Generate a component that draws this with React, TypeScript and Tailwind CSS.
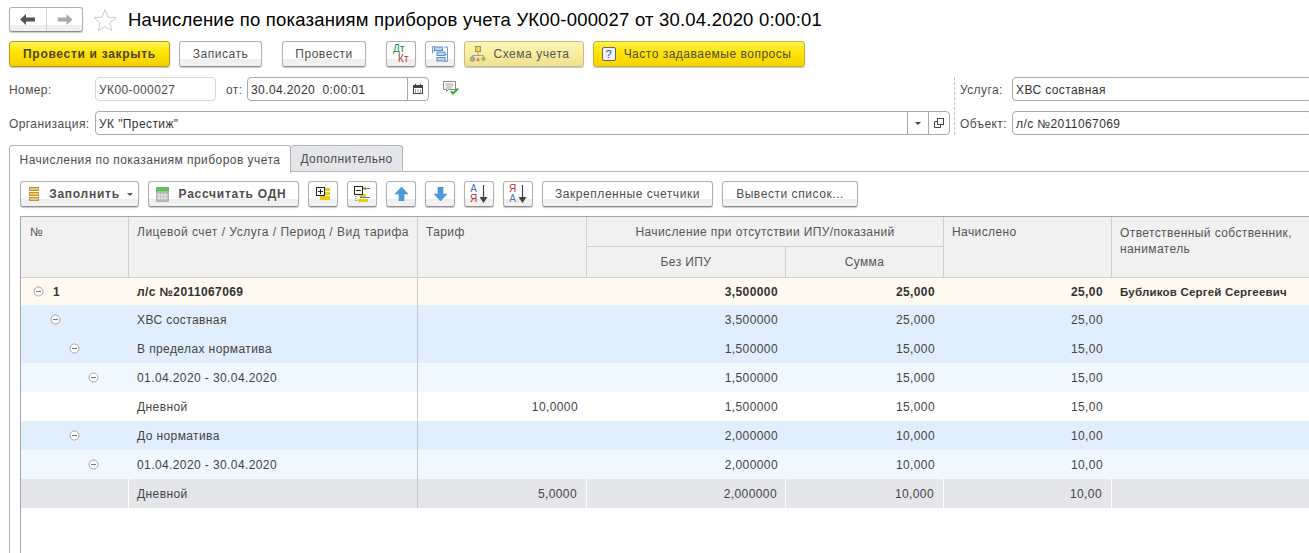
import { ReactNode } from 'react';

const BTN_BG = 'bg-[linear-gradient(#ffffff_0%,#ffffff_72%,#eeeeee_72%,#f2f2f2_100%)]';

// Обычная кнопка командной панели 1С
function Btn({ w, bold, children }: { w: string; bold?: boolean; children: ReactNode }) {
  return (
    <div
      className={`${w} ${BTN_BG} ${bold ? 'font-bold tracking-[0.75px]' : 'tracking-[0.55px]'} h-[26px] flex items-center justify-center shrink-0 rounded-[3px] border border-[#b0b0b0] border-b-[#8f8f8f] shadow-[0_1px_1px_#c8c8c8] text-[#4d4d4d]`}
    >
      {children}
    </div>
  );
}

function Minus() {
  return (
    <svg width="11" height="11" viewBox="0 0 11 11" className="shrink-0">
      <circle cx="5.5" cy="5.5" r="4.5" fill="#fff" stroke="#a6a6a6" />
      <path d="M3 5.5h5" stroke="#777" />
    </svg>
  );
}

function Field({ w, strong, border = 'border-[#a8a8a8]', children }: { w: string; strong?: boolean; border?: string; children?: ReactNode }) {
  return (
    <div className={`${w} ${border} ${strong ? 'text-[#333]' : 'text-[#4d4d4d]'} h-[24px] flex items-center rounded-[4px] border bg-white pl-[3px] shrink-0`}>
      {children}
    </div>
  );
}

function FieldText({ children }: { children: ReactNode }) {
  return <span className="flex-1 pt-[2px] whitespace-pre">{children}</span>;
}

function Label({ w, children }: { w: string; children: ReactNode }) {
  return <span className={`${w} pt-[2px] shrink-0`}>{children}</span>;
}

function BackArrow({ color }: { color: string }) {
  return (
    <svg width="15" height="11" viewBox="0 0 15 11">
      <path d="M0 5.5 6 0v3.5h9v4H6V11z" fill={color} />
    </svg>
  );
}

function UpArrow({ down }: { down?: boolean }) {
  return (
    <svg width="13" height="14" viewBox="0 0 13 14" className={down ? 'rotate-180' : ''}>
      <path d="M6.5 0 13 7H9v7H4V7H0z" fill="#4a9bdc" stroke="#3b85c4" strokeWidth="0.5" />
    </svg>
  );
}

function SortIcon({ top, bottom, topColor, bottomColor }: { top: string; bottom: string; topColor: string; bottomColor: string }) {
  return (
    <div className="flex items-center gap-[2px]">
      <div className="flex flex-col items-center text-[10px] leading-[10px] font-normal tracking-normal">
        <span className={topColor}>{top}</span>
        <span className={bottomColor}>{bottom}</span>
      </div>
      <svg width="9" height="19" viewBox="0 0 9 19">
        <path d="M4.5 0v14" stroke="#444" strokeWidth="1.2" />
        <path d="M0.5 12h8L4.5 18z" fill="#444" />
      </svg>
    </div>
  );
}

function TreeExpandIcon() {
  return (
    <svg width="15" height="15" viewBox="0 0 15 15">
      <rect x="7" y="1" width="7" height="3" fill="#e6cc14" />
      <rect x="7" y="5" width="7" height="3" fill="#e6cc14" />
      <rect x="4" y="9" width="10" height="4" fill="#e6cc14" />
      <rect x="0.5" y="0.5" width="8" height="8" fill="#fff" stroke="#222" />
      <path d="M2 4.5h5M4.5 2v5" stroke="#222" />
    </svg>
  );
}

function TreeCollapseIcon() {
  return (
    <svg width="16" height="17" viewBox="0 0 16 17">
      <rect x="5" y="1" width="7" height="3" fill="#e6cc14" />
      <rect x="5" y="8" width="7" height="3" fill="#e6cc14" />
      <rect x="4" y="13" width="10" height="3" fill="#e6cc14" />
      <path d="M9 2.5h7M6 11.5h10" stroke="#3a78b8" />
      <rect x="0.5" y="0.5" width="8" height="8" fill="#fff" stroke="#222" />
      <path d="M2 4.5h5" stroke="#222" />
      <path d="M2 10v6" stroke="#555" strokeDasharray="1 1" />
    </svg>
  );
}

const ROW_GRID = 'grid grid-cols-[108px_289px_169px_199px_158px_168px_198px]';

type Row = {
  tone: string;
  indent: string;
  num?: string;
  name: string;
  tariff?: string;
  noIpu: string;
  sum: string;
  total: string;
  owner?: string;
  bold?: boolean;
  h?: string;
  noTree?: boolean;
  cellBorder?: string;
};

const rows: Row[] = [
  { tone: 'bg-[#fffaf0]', indent: 'pl-[12px]', num: '1', name: 'л/с №2011067069', noIpu: '3,500000', sum: '25,000', total: '25,00', owner: 'Бубликов Сергей Сергеевич', bold: true, h: 'h-[27px]' },
  { tone: 'bg-[#e1eefd]', indent: 'pl-[29px]', name: 'ХВС составная', noIpu: '3,500000', sum: '25,000', total: '25,00' },
  { tone: 'bg-[#e1eefd]', indent: 'pl-[48px]', name: 'В пределах норматива', noIpu: '1,500000', sum: '15,000', total: '15,00' },
  { tone: 'bg-[#eff7ff]', indent: 'pl-[67px]', name: '01.04.2020 - 30.04.2020', noIpu: '1,500000', sum: '15,000', total: '15,00' },
  { tone: 'bg-white', indent: '', noTree: true, name: 'Дневной', tariff: '10,0000', noIpu: '1,500000', sum: '15,000', total: '15,00' },
  { tone: 'bg-[#e1eefd]', indent: 'pl-[48px]', name: 'До норматива', noIpu: '2,000000', sum: '10,000', total: '10,00' },
  { tone: 'bg-[#eff7ff]', indent: 'pl-[67px]', name: '01.04.2020 - 30.04.2020', noIpu: '2,000000', sum: '10,000', total: '10,00' },
  { tone: 'bg-[#e5e6ea]', indent: '', noTree: true, name: 'Дневной', tariff: '5,0000', noIpu: '2,000000', sum: '10,000', total: '10,00', cellBorder: 'border-r border-white' },
];

function TableRow({ row }: { row: Row }) {
  const cell = row.cellBorder ?? '';
  const num = 'flex items-center justify-end pr-[9px]';
  return (
    <div className={`${ROW_GRID} ${row.tone} ${row.h ?? 'h-[29px]'} ${row.bold ? 'font-bold text-[#333]' : 'text-[#444]'}`}>
      <div className={`${cell} ${row.indent} flex items-center gap-[9px]`}>
        {!row.noTree && <Minus />}
        {row.num && <span>{row.num}</span>}
      </div>
      <div className="flex items-center border-r border-[#c8c8c8] pl-[8px]">{row.name}</div>
      <div className={`${cell} ${num}`}>{row.tariff}</div>
      <div className={`${cell} flex items-center justify-end pr-[8px]`}>{row.noIpu}</div>
      <div className={`${cell} ${num}`}>{row.sum}</div>
      <div className={`${cell} ${num}`}>{row.total}</div>
      <div className={`${cell} flex items-center pl-[8px] text-[11.5px] tracking-[0.2px]`}>{row.owner}</div>
    </div>
  );
}

const HEAD = 'bg-[#f1f1f1] border-r border-b border-[#cfcfcf] text-[#555]';

export default function App() {
  return (
    <div className="w-[1309px] h-[553px] overflow-hidden bg-white text-[12px] leading-[14px] font-['Liberation_Sans',Arial,sans-serif] text-[#4d4d4d] tracking-[0.4px]">
      {/* Заголовок */}
      <div className="flex items-center h-[25px] mt-[7px] ml-[9px] pt-0">
        <div className={`${BTN_BG} flex h-[25px] w-[74px] rounded-[3px] border border-[#b0b0b0] border-b-[#8f8f8f] shadow-[0_1px_1px_#c8c8c8]`}>
          <div className="flex flex-1 items-center justify-center border-r border-[#d0d0d0]"><BackArrow color="#555" /></div>
          <div className="flex flex-1 items-center justify-center rotate-180"><BackArrow color="#aaa" /></div>
        </div>
        <svg width="24" height="24" viewBox="0 0 24 24" className="ml-[10px] shrink-0">
          <path d="M12 1.5l3 7.6 8 .6-6.1 5.2 1.9 7.8L12 18.5l-6.8 4.2 1.9-7.8L1 9.7l8-.6z" fill="#fff" stroke="#c9ccd2" />
        </svg>
        <h1 className="ml-[11px] text-[18.5px] tracking-[0.2px] font-normal text-black whitespace-nowrap">
          Начисление по показаниям приборов учета УК00-000027 от 30.04.2020 0:00:01
        </h1>
      </div>

      {/* Команды */}
      <div className="flex items-center h-[26px] ml-[9px] mt-[9px]">
        <div className="w-[161px] h-[26px] flex items-center justify-center rounded-[3px] border border-[#b09a1a] bg-[linear-gradient(#fff15a_0%,#ffe300_45%,#f5d000_100%)] font-bold tracking-[0.7px] text-[#4d4520] shadow-[0_1px_1px_#c8c8c8]">
          Провести и закрыть
        </div>
        <div className="ml-[9px]"><Btn w="w-[83px]">Записать</Btn></div>
        <div className="ml-[20px]"><Btn w="w-[84px]">Провести</Btn></div>
        <div className="ml-[20px]">
          <Btn w="w-[30px]">
            <div className="flex flex-col text-[10px] leading-[10px] font-normal tracking-[0.3px]">
              <span className="text-[#0f8a3c]">Дт</span>
              <span className="text-[#b83232] ml-[5px]">Кт</span>
            </div>
          </Btn>
        </div>
        <div className="ml-[9px]">
          <Btn w="w-[30px]">
            <svg width="16" height="16" viewBox="0 0 16 16" fill="none">
              <path d="M3 .5H.5v7M.5 5H3M13 8.5h2.5V1H12M15.5 8.5v7H13" stroke="#6a9cc8" />
              <rect x="2.5" y="1" width="8" height="3.5" fill="#bcd4ec" stroke="#5b92c4" />
              <rect x="5" y="6" width="8" height="3.5" fill="#bcd4ec" stroke="#5b92c4" />
              <rect x="5" y="11.5" width="8" height="3.5" fill="#bcd4ec" stroke="#5b92c4" />
            </svg>
          </Btn>
        </div>
        <div className="ml-[9px] w-[120px] h-[26px] flex items-center justify-center gap-[7px] pr-[8px] rounded-[3px] border border-[#c4bc90] bg-[linear-gradient(#fdf5b4_0%,#f8eca0_50%,#efe08c_100%)] shadow-[0_1px_1px_#c8c8c8] tracking-[0.55px] text-[#555]">
          <svg width="16" height="16" viewBox="0 0 16 16" fill="none" className="opacity-75">
            <path d="M8 5v5M2.5 12V9.5h11V12" stroke="#888" />
            <rect x="5.5" y="0.5" width="5" height="5" fill="#f0d020" stroke="#777" />
            <circle cx="2.5" cy="13" r="2.2" fill="#8aa6c4" stroke="#777" />
            <path d="M6 15l2-4 2 4z" fill="#c2664c" />
            <path d="M11 13l2.5-2.5L16 13l-2.5 2.5z" fill="#5aaa5a" />
          </svg>
          Схема учета
        </div>
        <div className="ml-[9px] w-[212px] h-[26px] flex items-center justify-center gap-[8px] pr-[5px] rounded-[3px] border border-[#c2b23c] bg-[linear-gradient(#fff04a_0%,#ffe200_50%,#f6d400_100%)] shadow-[0_1px_1px_#c8c8c8] tracking-[0.5px] text-[#4d4d30]">
          <span className="w-[14px] h-[14px] flex items-center justify-center rounded-[2px] border border-[#666] bg-[#eef2fa] text-[#2a4cc0] text-[11px] tracking-normal">?</span>
          Часто задаваемые вопросы
        </div>
      </div>

      {/* Реквизиты шапки */}
      <div className="flex mt-[10px] ml-[9px]">
        <div className="w-[940px] flex flex-col gap-[10px]">
          <div className="flex items-center">
            <Label w="w-[86px]">Номер:</Label>
            <Field w="w-[121px]" border="border-[#d8d8d8]"><FieldText>УК00-000027</FieldText></Field>
            <Label w="ml-[10px] w-[21px]">от:</Label>
            <Field w="w-[182px]" strong>
              <FieldText>30.04.2020  0:00:01</FieldText>
              <span className="w-[21px] h-full flex items-center justify-center border-l border-[#a8a8a8]">
                <svg width="10" height="10" viewBox="0 0 10 10">
                  <rect x="0.5" y="1.5" width="9" height="8" fill="#fff" stroke="#444" />
                  <rect x="0" y="1" width="10" height="3" fill="#444" />
                  <path d="M2 6h1M4.5 6h1M7 6h1M2 8h1M4.5 8h1M7 8h1" stroke="#444" />
                  <path d="M2.5 0v2M7.5 0v2" stroke="#444" />
                </svg>
              </span>
            </Field>
            <svg width="16" height="14" viewBox="0 0 16 14" className="ml-[14px] -mt-[2px]">
              <path d="M.5.5h12v8h-7l-2 2v-2h-3z" fill="#fff" stroke="#8a8a8a" />
              <path d="M2.5 3h8M2.5 5h8M2.5 7h6" stroke="#a0a0a0" />
              <path d="M8 10l2 2.5L15 7.5" stroke="#35a835" strokeWidth="2" fill="none" />
            </svg>
          </div>
          <div className="flex items-center">
            <Label w="w-[86px]">Организация:</Label>
            <Field w="w-[855px]" strong>
              <FieldText>УК "Престиж"</FieldText>
              <span className="w-[21px] h-full flex items-center justify-center border-l border-[#a8a8a8]">
                <span className="border-x-[3px] border-t-[3px] border-x-transparent border-t-[#444]" />
              </span>
              <span className="w-[21px] h-full flex items-center justify-center border-l border-[#a8a8a8]">
                <svg width="10" height="10" viewBox="0 0 10 10" fill="none">
                  <rect x="3.5" y="0.5" width="6" height="6" stroke="#444" />
                  <path d="M3.5 3.5h-3v6h6v-3" stroke="#444" />
                </svg>
              </span>
            </Field>
          </div>
        </div>
        <div className="ml-[5px] pl-[5px] border-l border-dashed border-[#c8c8c8] flex flex-col gap-[10px]">
          <div className="flex items-center">
            <Label w="w-[52px]">Услуга:</Label>
            <Field w="w-[300px]" strong><FieldText>ХВС составная</FieldText></Field>
          </div>
          <div className="flex items-center">
            <Label w="w-[52px]">Объект:</Label>
            <Field w="w-[300px]" strong><FieldText>л/с №2011067069</FieldText></Field>
          </div>
        </div>
      </div>

      {/* Закладки */}
      <div className="flex h-[28px] mt-[10px] ml-[9px] tracking-[0.45px]">
        <div className="w-[282px] h-[28px] flex items-center justify-center rounded-t-[3px] border border-b-0 border-[#b4b4b4] bg-white text-[#4d4d4d]">
          Начисления по показаниям приборов учета
        </div>
        <div className="w-[112px] h-[27px] flex items-center justify-center rounded-t-[3px] border border-l-0 border-[#b4b4b4] bg-[#e5e6ea] text-[#4d4d4d]">
          Дополнительно
        </div>
        <div className="flex-1 border-b border-[#b4b4b4] h-[27px]" />
      </div>

      {/* Панель закладки */}
      <div className="ml-[9px] h-[400px] border-l border-[#b4b4b4] pl-[10px] pt-[8px]">
        <div className="flex items-center gap-[9px]">
          <Btn w="w-[119px]" bold>
            <div className="flex items-center gap-[10px] pl-[3px]">
              <svg width="10" height="14" viewBox="0 0 10 14">
                <rect x="0.5" y="0.5" width="9" height="3" fill="#eec468" stroke="#c09438" />
                <rect x="0.5" y="5.5" width="9" height="3" fill="#eec468" stroke="#c09438" />
                <rect x="0.5" y="10.5" width="9" height="3" fill="#eec468" stroke="#c09438" />
              </svg>
              Заполнить
              <span className="-ml-[3px] border-x-[3px] border-t-[3px] border-x-transparent border-t-[#555]" />
            </div>
          </Btn>
          <Btn w="w-[151px]" bold>
            <div className="flex items-center gap-[10px] pr-[5px]">
              <svg width="13" height="15" viewBox="0 0 13 15">
                <rect x="0" y="0" width="13" height="15" fill="#b4b4b4" />
                <rect x="0" y="0" width="13" height="4" fill="#5cc35c" />
                <path d="M3 6v7M6 6v7M9 6v7M1 8h11M1 11h11" stroke="#eeeeee" />
              </svg>
              Рассчитать ОДН
            </div>
          </Btn>
          <Btn w="w-[30px]"><TreeExpandIcon /></Btn>
          <Btn w="w-[30px]"><TreeCollapseIcon /></Btn>
          <Btn w="w-[30px]"><UpArrow /></Btn>
          <Btn w="w-[30px]"><UpArrow down /></Btn>
          <Btn w="w-[30px]"><SortIcon top="А" bottom="Я" topColor="text-[#3a78b8]" bottomColor="text-[#c03030]" /></Btn>
          <Btn w="w-[30px]"><SortIcon top="Я" bottom="А" topColor="text-[#c03030]" bottomColor="text-[#3a78b8]" /></Btn>
          <Btn w="w-[171px]">Закрепленные счетчики</Btn>
          <Btn w="w-[136px]">Вывести список...</Btn>
        </div>

        {/* Таблица */}
        <div className="mt-[9px] w-[1300px] h-[340px] border-l border-t border-[#a8a8a8]">
          <div className={`${ROW_GRID} grid-rows-[30px_31px]`}>
            <div className={`${HEAD} row-span-2 pl-[9px] pt-[8px]`}>№</div>
            <div className={`${HEAD} row-span-2 pl-[8px] pt-[8px] whitespace-nowrap tracking-[0.5px]`}>Лицевой счет / Услуга / Период / Вид тарифа</div>
            <div className={`${HEAD} row-span-2 pl-[8px] pt-[8px]`}>Тариф</div>
            <div className={`${HEAD} col-span-2 flex items-center justify-center`}>Начисление при отсутствии ИПУ/показаний</div>
            <div className={`${HEAD} row-span-2 pl-[8px] pt-[8px]`}>Начислено</div>
            <div className={`${HEAD} row-span-2 pl-[8px] pt-[8px] leading-[16px]`}>Ответственный собственник, наниматель</div>
            <div className={`${HEAD} flex items-center justify-center`}>Без ИПУ</div>
            <div className={`${HEAD} flex items-center justify-center`}>Сумма</div>
          </div>
          {rows.map((row, i) => (
            <TableRow key={i} row={row} />
          ))}
        </div>
      </div>
    </div>
  );
}
